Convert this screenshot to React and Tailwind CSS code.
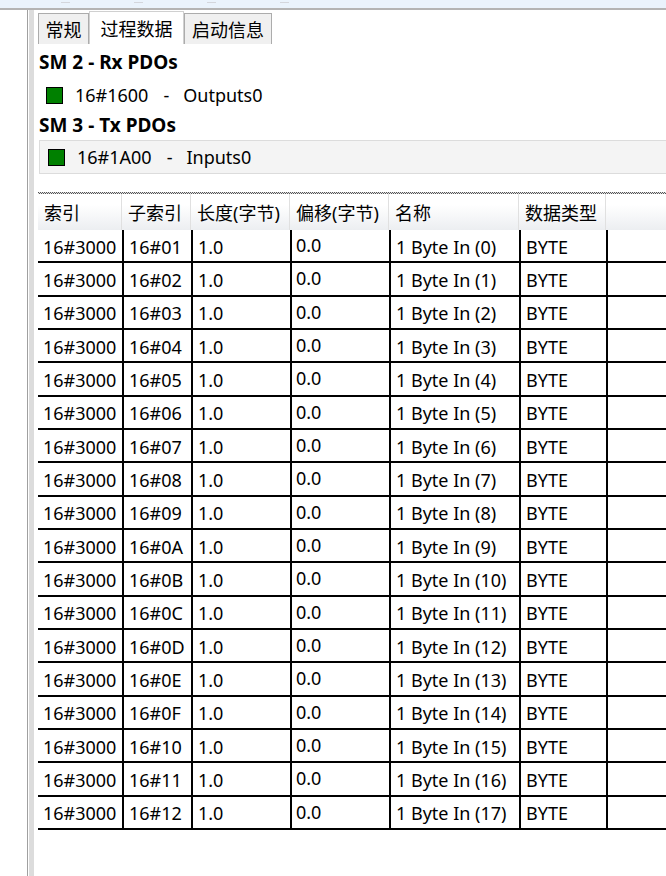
import React from "react";

const cols = [
  { label: "索引", w: "w-[84px]" },
  { label: "子索引", w: "w-[69px]" },
  { label: "长度(字节)", w: "w-[99px]" },
  { label: "偏移(字节)", w: "w-[99px]" },
  { label: "名称", w: "w-[130px]" },
  { label: "数据类型", w: "w-[87px]" },
];

const hex = ["01", "02", "03", "04", "05", "06", "07", "08", "09", "0A", "0B", "0C", "0D", "0E", "0F", "10", "11", "12"];
const rows = hex.map((h, i) => ({
  index: "16#3000",
  sub: "16#" + h,
  len: "1.0",
  off: "0.0",
  name: `1 Byte In (${i})`,
  type: "BYTE",
}));

function PdoLine({ id, name }) {
  return (
    <div className="flex items-center">
      <span className="ml-[8px] w-[17px] h-[17px] border border-black bg-[#008000]" />
      <span className="ml-[12px]">{id}</span>
      <span className="ml-[15px]">-</span>
      <span className="ml-[14px]">{name}</span>
    </div>
  );
}

export default function App() {
  return (
    <div className="w-[666px] h-[876px] overflow-hidden bg-white flex flex-col text-black font-['Noto_Sans','Noto_Sans_CJK_SC',sans-serif] text-[18px] leading-none">
      {/* top strip */}
      <div className="h-[8px] bg-[#eaf3fc] flex items-start pl-[61px] gap-[64px]">
        {[0, 1, 2, 3].map((k) => (
          <span key={k} className="mt-[2px] w-[9px] h-[1px] bg-[#d3d6dc]" />
        ))}
      </div>
      <div className="h-[2px] bg-[#b4b4b4]" />

      <div className="flex flex-1 min-h-0">
        {/* left panel + splitter */}
        <div className="w-[27px] bg-white" />
        <div className="w-px bg-[#a0a0a0]" />
        <div className="w-px bg-white" />
        <div className="w-[5px] bg-[#dcdcdc]" />

        <div className="flex-1 min-w-0 flex flex-col pl-[4px]">
          {/* tabs */}
          <div className="flex items-end h-[34px] pt-[1px] font-['Noto_Sans_CJK_SC',sans-serif]">
            <div className="w-[51px] h-[31px] bg-[#f0f0f0] border border-[#acacac] border-b-0 flex items-center justify-center">
              常规
            </div>
            <div className="w-[95px] h-[33px] bg-white border border-[#d0d0d0] border-b-0 flex items-center justify-center">
              过程数据
            </div>
            <div className="w-[88px] h-[31px] bg-[#f0f0f0] border border-[#acacac] border-b-0 flex items-center justify-center">
              启动信息
            </div>
          </div>

          {/* PDO assignment */}
          <div className="h-[36px] flex items-center pl-[1px] font-bold text-[19px]">SM 2 - Rx PDOs</div>
          <div className="h-[30px] flex items-center">
            <PdoLine id="16#1600" name="Outputs0" />
          </div>
          <div className="h-[30px] flex items-center pl-[1px] font-bold text-[19px]">SM 3 - Tx PDOs</div>
          <div className="h-[34px] ml-[1px] flex items-center bg-[#f4f4f4] border border-r-0 border-[#dcdcdc]">
            <PdoLine id="16#1A00" name="Inputs0" />
          </div>

          <div className="h-[18px]" />

          {/* dotted splitter */}
          <div className="h-px bg-[repeating-linear-gradient(90deg,#555_0_1px,#e4e4e4_1px_2px)]" />
          <div className="h-px bg-[repeating-linear-gradient(90deg,#e4e4e4_0_1px,#555_1px_2px)]" />

          {/* table header */}
          <div className="h-[36px] flex bg-linear-to-b from-white from-30% to-[#eceef1]">
            {cols.map((c) => (
              <div
                key={c.label}
                className={`${c.w} shrink-0 flex items-center pl-[6px] pt-[2px] border-r border-[#e0e0e0]`}
              >
                {c.label}
              </div>
            ))}
            <div className="flex-1" />
          </div>

          {/* table body */}
          <div className="flex flex-col">
            {rows.map((r) => (
              <div key={r.sub} className="h-[33.33px] flex border-b-2 border-black">
                <div className="w-[84px] shrink-0 flex items-center pl-[5px] pt-[2px]">{r.index}</div>
                <div className="w-[69px] shrink-0 flex items-center pl-[5px] pt-[2px] border-l-2 border-black">{r.sub}</div>
                <div className="w-[99px] shrink-0 flex items-center pl-[5px] pt-[2px] border-l-2 border-black">{r.len}</div>
                <div className="w-[99px] shrink-0 flex items-start pl-[4px] pt-[6px] border-l-2 border-black">{r.off}</div>
                <div className="w-[130px] shrink-0 flex items-center pl-[5px] pt-[2px] border-l-2 border-black">{r.name}</div>
                <div className="w-[87px] shrink-0 flex items-center pl-[5px] pt-[2px] border-l-2 border-black">{r.type}</div>
                <div className="flex-1 border-l-2 border-black" />
              </div>
            ))}
          </div>
        </div>
      </div>
    </div>
  );
}
